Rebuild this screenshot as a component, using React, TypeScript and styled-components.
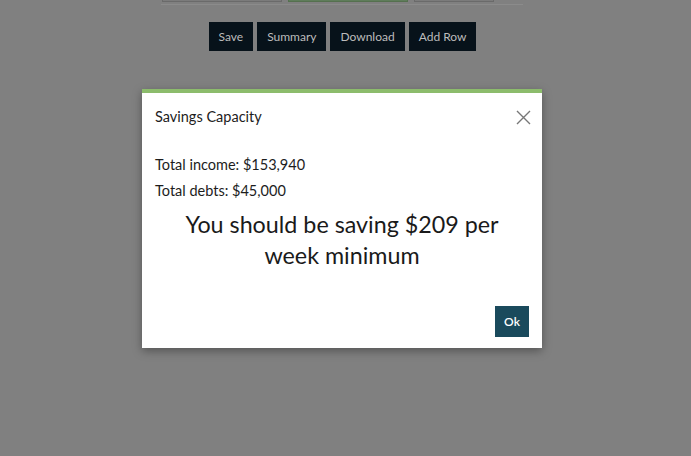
import React from "react";
import styled, { createGlobalStyle } from "styled-components";

const Global = createGlobalStyle`
  html, body { margin: 0; padding: 0; background: #808080; }
  body { font-family: Lato, "Open Sans", sans-serif; overflow: hidden; }
`;

const Page = styled.div`
  width: 683px;
  height: 456px;
  display: flex;
  flex-direction: column;
  align-items: center;
`;

const FormRow = styled.div`
  width: 361px;
  height: 4px;
  border-bottom: 1px solid #8b8b8b;
  display: flex;
  gap: 6px;
  padding-left: 1px;
  box-sizing: content-box;
`;

const Field = styled.div<{ $w: number; $green?: boolean }>`
  width: ${(p) => p.$w}px;
  height: 1px;
  background: ${(p) => (p.$green ? "#5f7d5b" : "#7b7b7b")};
  border: 1px solid ${(p) => (p.$green ? "#55704f" : "#6a6a6a")};
  border-top: none;
`;

const Actions = styled.div`
  margin-top: 17px;
  margin-left: 2px;
  display: flex;
  gap: 4px;
`;

const ActionButton = styled.button`
  height: 29px;
  padding: 0 10px;
  background: #07121a;
  color: #bcbcbc;
  border: none;
  font-family: Lato, sans-serif;
  font-size: 12px;
  font-weight: 400;
  cursor: pointer;
`;

const Dialog = styled.div`
  position: absolute;
  left: 142px;
  top: 89px;
  width: 400px;
  height: 259px;
  box-sizing: border-box;
  background: #fff;
  border-top: 4px solid #8cbc6c;
  box-shadow: 0 3px 9px rgba(0, 0, 0, 0.35);
  display: flex;
  flex-direction: column;
  padding: 0 13px 11px;
`;

const Header = styled.div`
  display: flex;
  justify-content: space-between;
  align-items: center;
  height: 47px;
`;

const Title = styled.h4`
  margin: 0;
  font-size: 14.5px;
  font-weight: 400;
  color: #1d1d1d;
`;

const Close = styled.button`
  background: none;
  border: none;
  padding: 0;
  width: 16px;
  height: 16px;
  margin-right: -2px;
  margin-top: 1px;
  display: flex;
  align-items: center;
  justify-content: center;
  cursor: pointer;
`;

const Body = styled.div`
  flex: 1;
  padding-top: 12px;
`;

const Line = styled.p`
  margin: 0;
  font-size: 14.5px;
  line-height: 26px;
  color: #1d1d1d;
`;

const Headline = styled.h2`
  margin: 5px 0 0;
  font-size: 23.3px;
  font-weight: 400;
  line-height: 31px;
  text-align: center;
  color: #1a1a1a;
`;

const Footer = styled.div`
  display: flex;
  justify-content: flex-end;
`;

const OkButton = styled.button`
  width: 34px;
  height: 31px;
  background: #1a4a5c;
  color: #fff;
  border: none;
  font-family: Lato, sans-serif;
  font-size: 12px;
  font-weight: 600;
  cursor: pointer;
`;

export default function App() {
  return (
    <>
      <Global />
      <Page>
        <FormRow>
          <Field $w={118} />
          <Field $w={118} $green />
          <Field $w={78} />
        </FormRow>
        <Actions>
          <ActionButton>Save</ActionButton>
          <ActionButton>Summary</ActionButton>
          <ActionButton>Download</ActionButton>
          <ActionButton>Add Row</ActionButton>
        </Actions>
      </Page>
      <Dialog>
        <Header>
          <Title>Savings Capacity</Title>
          <Close aria-label="Close">
            <svg width="15" height="15" viewBox="0 0 15 15">
              <path d="M1 1L14 14M14 1L1 14" stroke="#777" strokeWidth="1.4" fill="none" />
            </svg>
          </Close>
        </Header>
        <Body>
          <Line>Total income: $153,940</Line>
          <Line>Total debts: $45,000</Line>
          <Headline>
            You should be saving $209 per
            <br />
            week minimum
          </Headline>
        </Body>
        <Footer>
          <OkButton>Ok</OkButton>
        </Footer>
      </Dialog>
    </>
  );
}
